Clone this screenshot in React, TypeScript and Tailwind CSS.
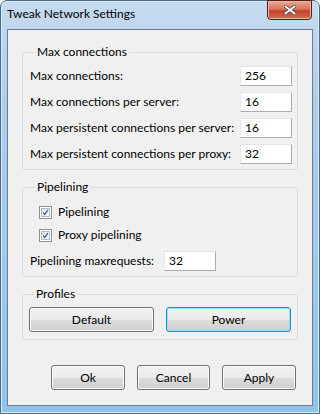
import type { ReactNode } from "react";

const font = { fontFamily: '"Segoe UI", Lato, "Noto Sans", sans-serif' };

function Group({ title, children, className = "" }: { title: string; children: ReactNode; className?: string }) {
  return (
    <fieldset className={`border border-[#d5dfe5] rounded-[3px] ${className}`}>
      <legend className="ml-[5px] px-[2px] leading-[16px]">{title}</legend>
      {children}
    </fieldset>
  );
}

function TextBox({ value, className = "" }: { value: string; className?: string }) {
  return (
    <div className={`h-[20px] w-[52px] shrink-0 bg-white border border-[#abadb3] border-t-[#e3e3e3] border-l-[#e3e9ef] px-[4px] leading-[18px] ${className}`}>
      {value}
    </div>
  );
}

function Button({ label, focused = false, className = "" }: { label: string; focused?: boolean; className?: string }) {
  return (
    <div
      className={`flex items-center justify-center h-[25px] rounded-[3px] border bg-[linear-gradient(to_bottom,#f2f2f2_0%,#ebebeb_50%,#dddddd_50%,#cfcfcf_100%)] ${
        focused
          ? "border-[#2c8ac0] shadow-[inset_0_0_0_1px_#8ee3fa]"
          : "border-[#707070] shadow-[inset_0_0_0_1px_#fcfcfc]"
      } ${className}`}
    >
      {label}
    </div>
  );
}

function Check({ label }: { label: string }) {
  return (
    <div className="flex items-center h-[20px] pl-[9px] gap-[6px]">
      <span className="w-[13px] h-[13px] border border-[#8e8f8f] bg-white p-[1px]">
        <span className="block w-full h-full border border-[#b4bcc6] bg-[linear-gradient(135deg,#dde4ea,#f6f8fa)] relative">
          <svg viewBox="0 0 9 9" className="absolute inset-0 w-full h-full">
            <path d="M1.5 4.5 L3.5 7 L7.5 1.5" fill="none" stroke="#3d5da6" strokeWidth="1.6" />
          </svg>
        </span>
      </span>
      <span>{label}</span>
    </div>
  );
}

export default function App() {
  const rows = [
    ["Max connections:", "256"],
    ["Max connections per server:", "16"],
    ["Max persistent connections per server:", "16"],
    ["Max persistent connections per proxy:", "32"],
  ];

  return (
    <div
      style={font}
      className="w-[320px] h-[414px] flex flex-col rounded-t-[7px] border border-[#4a6a8c] bg-[linear-gradient(to_bottom,#c6dbef_0%,#aecdea_25%,#a3c9eb_60%,#8fc3ee_100%)] text-[12px] text-black whitespace-nowrap shadow-[inset_0_0_0_1px_#d9ecfa]"
    >
      <div className="flex justify-between h-[28px] pl-[6px] pr-[7px]">
        <div className="pt-[5px] text-[12px] leading-[16px] text-black">Tweak Network Settings</div>
        <div className="flex items-center justify-center w-[45px] h-[20px] -mt-px rounded-b-[4px] border border-[#5b1d12] bg-[linear-gradient(to_bottom,#e9a996_0%,#d9745c_45%,#c4412a_55%,#d46c4d_100%)] shadow-[inset_0_0_0_1px_#eab7a8]">
          <svg viewBox="0 0 12 10" className="w-[12px] h-[10px]">
            <path d="M1.5 1.5 L10.5 8.5 M10.5 1.5 L1.5 8.5" stroke="#4a4a4a" strokeWidth="3.4" strokeLinecap="square" />
            <path d="M1.5 1.5 L10.5 8.5 M10.5 1.5 L1.5 8.5" stroke="#ffffff" strokeWidth="1.8" strokeLinecap="square" />
          </svg>
        </div>
      </div>

      <div className="mx-[6px] mb-[7px] flex-1 flex flex-col border border-[#6b7d8f] bg-[#f0f0f0] px-[14px] pt-[14px]">
        <Group title="Max connections" className="pl-[7px] pr-[5px] pt-[6px] pb-[5px]">
          <div className="flex flex-col gap-[6px]">
            {rows.map(([label, value]) => (
              <div key={label} className="flex items-center">
                <span>{label}</span>
                <TextBox value={value} className="ml-auto" />
              </div>
            ))}
          </div>
        </Group>

        <Group title="Pipelining" className="mt-[9px] pl-[7px] pt-[7px] pb-[5px]">
          <Check label="Pipelining" />
          <div className="mt-[3px]">
            <Check label="Proxy pipelining" />
          </div>
          <div className="flex items-center mt-[6px]">
            <span className="w-[134px]">Pipelining maxrequests:</span>
            <TextBox value="32" />
          </div>
        </Group>

        <Group title="Profiles" className="mt-[9px] px-[6px] pt-[5px] pb-[7px]">
          <div className="grid grid-cols-2 gap-[12px]">
            <Button label="Default" />
            <Button label="Power" focused />
          </div>
        </Group>

        <div className="mt-[25px] mr-[2px] flex justify-end gap-[12px]">
          <Button label="Ok" className="w-[74px]" />
          <Button label="Cancel" className="w-[73px]" />
          <Button label="Apply" className="w-[74px]" />
        </div>
      </div>
    </div>
  );
}
